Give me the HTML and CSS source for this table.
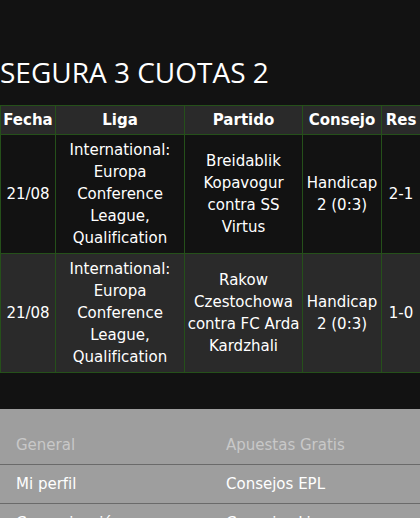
FILE: index.html
```html
<!DOCTYPE html>
<html lang="es">
<head>
<meta charset="utf-8">
<title>Segura 3 cuotas 2</title>
<link rel="stylesheet" href="styles.css">
</head>
<body>
<main class="page">
  <h1 class="title">SEGURA 3 CUOTAS 2</h1>
  <div class="table-wrap">
    <table class="tips">
      <colgroup>
        <col class="c-date">
        <col class="c-league">
        <col class="c-match">
        <col class="c-tip">
        <col class="c-res">
      </colgroup>
      <thead>
        <tr>
          <th>Fecha</th>
          <th>Liga</th>
          <th>Partido</th>
          <th>Consejo</th>
          <th>Res</th>
        </tr>
      </thead>
      <tbody>
        <tr class="row-dark">
          <td>21/08</td>
          <td>International: Europa Conference League, Qualification</td>
          <td>Breidablik Kopavogur contra SS Virtus</td>
          <td>Handicap 2 (0:3)</td>
          <td>2-1</td>
        </tr>
        <tr class="row-light">
          <td>21/08</td>
          <td>International: Europa Conference League, Qualification</td>
          <td>Rakow Czestochowa contra FC Arda Kardzhali</td>
          <td>Handicap 2 (0:3)</td>
          <td>1-0</td>
        </tr>
      </tbody>
    </table>
  </div>
</main>
<footer class="footer">
  <ul class="footer-col">
    <li class="muted">General</li>
    <li>Mi perfil</li>
    <li>Comunicación</li>
  </ul>
  <ul class="footer-col">
    <li class="muted">Apuestas Gratis</li>
    <li>Consejos EPL</li>
    <li>Consejos Liga</li>
  </ul>
</footer>
</body>
</html>
```

FILE: styles.css
```css
html, body {
  margin: 0;
  padding: 0;
  background: #121212;
  overflow: hidden;
}

body {
  font-family: "DejaVu Sans", Verdana, sans-serif;
  color: #ffffff;
}

.page {
  padding-bottom: 36px;
}

.title {
  font-family: "Open Sans", "Noto Sans", sans-serif;
  font-weight: normal;
  font-size: 28px;
  line-height: 38px;
  margin: 53px 0 14px 0;
  color: #ffffff;
}

.table-wrap {
  width: 420px;
}

.tips {
  width: 420px;
  table-layout: fixed;
  border-collapse: collapse;
  font-size: 15px;
  line-height: 22px;
}

.c-date { width: 55px; }
.c-league { width: 129px; }
.c-match { width: 118px; }
.c-tip { width: 79px; }
.c-res { width: 39px; }

.tips th,
.tips td {
  border: 1px solid #25501a;
  text-align: center;
  vertical-align: middle;
  padding: 4px 1px;
}

.tips th {
  background: #2a2a2a;
  font-weight: bold;
  padding: 3px 1px;
}

.row-dark td {
  background: #121212;
}

.row-light td {
  background: #2a2a2a;
}

.footer {
  display: grid;
  grid-template-columns: 210px 210px;
  background: #9e9e9e;
  padding-top: 17px;
  height: 200px;
}

.footer-col {
  list-style: none;
  margin: 0;
  padding: 0;
}

.footer-col li {
  font-size: 15px;
  line-height: 22px;
  padding: 8px 16px 8px 16px;
  border-bottom: 1px solid #6a6a6a;
  color: #ffffff;
}

.footer-col li.muted {
  color: #c8c8c8;
}
```
